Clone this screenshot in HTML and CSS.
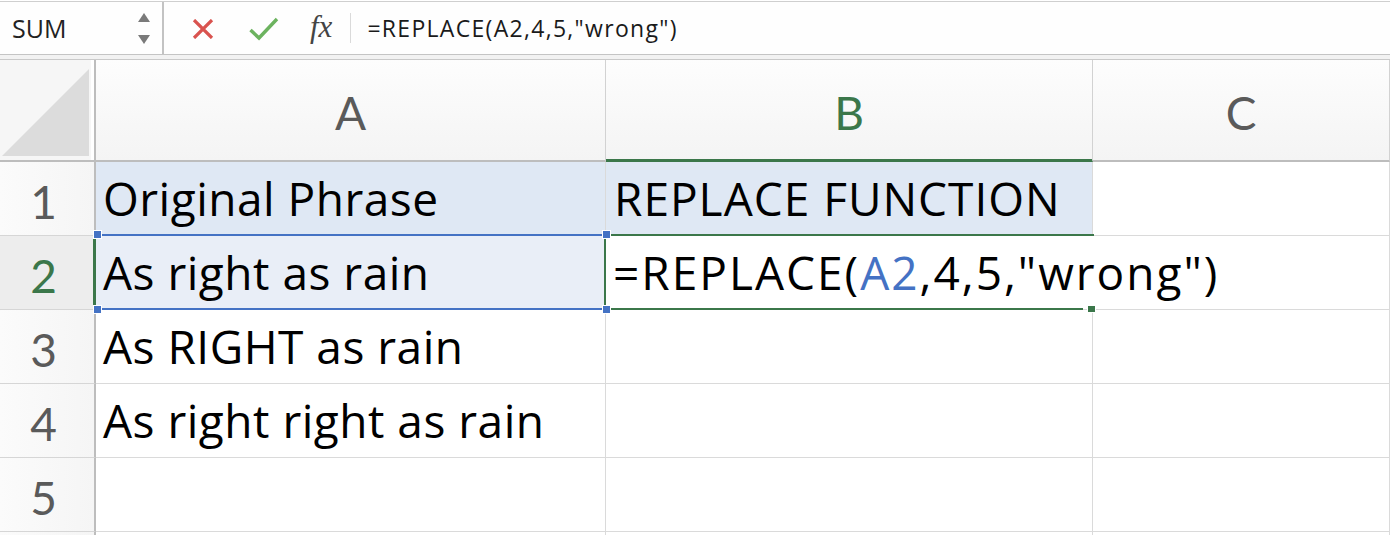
FILE: index.html
```html
<!DOCTYPE html>
<html>
<head>
<meta charset="utf-8">
<link rel="stylesheet" href="styles.css">
</head>
<body>
<div class="formula-bar">
  <div class="name-box">
    <span class="name">SUM</span>
    <svg class="spin" width="12" height="32" viewBox="0 0 12 32"><polygon points="6,0 12,9 0,9" fill="#7a7a7a"/><polygon points="0,22 12,22 6,31" fill="#7a7a7a"/></svg>
  </div>
  <div class="fb-icons">
    <svg class="ic-x" width="22" height="20" viewBox="0 0 22 20"><path d="M2 1 L20 19 M20 1 L2 19" stroke="#d9534f" stroke-width="3.2" stroke-linecap="butt" fill="none"/></svg>
    <svg class="ic-check" width="30" height="24" viewBox="0 0 30 24"><path d="M1.5 13 L10 21 L28 2" stroke="#6cb35f" stroke-width="3.4" fill="none"/></svg>
    <span class="fx">fx</span>
  </div>
  <div class="fb-divider"></div>
  <div class="fb-text">=REPLACE(A2,4,5,"wrong")</div>
</div>
<div class="fb-gap"></div>
<div class="sheet">
  <div class="corner"><svg width="93" height="100" viewBox="0 0 93 100"><polygon points="2,96 89,9 89,96" fill="#dcdcdc"/></svg></div>
  <div class="colhead">A</div>
  <div class="colhead active">B</div>
  <div class="colhead">C</div>

  <div class="rowhead">1</div>
  <div class="cell hl"><span class="txt">Original Phrase</span></div>
  <div class="cell hl caps"><span class="txt">REPLACE FUNCTION</span></div>
  <div class="cell"></div>

  <div class="rowhead active">2</div>
  <div class="cell ref"><span class="txt">As right as rain</span><span class="ref-box"></span><span class="h h-tl"></span><span class="h h-tr"></span><span class="h h-bl"></span><span class="h h-br"></span></div>
  <div class="cell edit"><span class="txt">=REPLACE(<span class="refc">A2</span>,4,5,"wrong")</span><span class="edit-box"></span><span class="edit-bottom"></span><span class="fill-handle"></span></div>
  <div class="cell"></div>

  <div class="rowhead">3</div>
  <div class="cell"><span class="txt">As RIGHT as rain</span></div>
  <div class="cell"></div>
  <div class="cell"></div>

  <div class="rowhead">4</div>
  <div class="cell"><span class="txt">As right right as rain</span></div>
  <div class="cell"></div>
  <div class="cell"></div>

  <div class="rowhead">5</div>
  <div class="cell"></div>
  <div class="cell"></div>
  <div class="cell"></div>

  <div class="rowhead"></div>
  <div class="cell"></div>
  <div class="cell"></div>
  <div class="cell"></div>
</div>
</body>
</html>
```

FILE: styles.css
```css
* { box-sizing: border-box; }
html, body { margin: 0; padding: 0; background: #fff; overflow: hidden; }
body { width: 1390px; height: 535px; font-family: "Open Sans", "Liberation Sans", sans-serif; }

.formula-bar {
  margin-top: 1px;
  height: 54px;
  border-top: 1px solid #cfcfcf;
  border-bottom: 1px solid #c4c4c4;
  display: flex;
  align-items: center;
  background: #fefefe;
}
.name-box {
  width: 164px;
  height: 100%;
  border-right: 2px solid #c3c3c3;
  display: flex;
  align-items: center;
  padding-left: 12px;
  padding-right: 12px;
}
.name { font-size: 25px; color: #222; flex: 1; }
.spin { margin-top: 1px; }
.fb-icons { display: flex; align-items: center; padding-left: 28px; }
.ic-x { margin-top: 1px; }
.ic-check { margin-left: 35px; margin-top: 2px; }
.fx {
  margin-left: 31px;
  font-family: "Liberation Serif", "DejaVu Serif", serif;
  font-style: italic;
  font-size: 31px;
  color: #444;
  margin-top: -3px;
}
.fb-divider { width: 1px; height: 30px; background: #dadada; margin-left: 18px; }
.fb-text { margin-left: 16px; font-size: 23px; letter-spacing: 1.3px; color: #1a1a1a; }

.fb-gap { height: 5px; background: #f2f2f2; border-bottom: 1px solid #c9c9c9; }

.sheet {
  display: grid;
  grid-template-columns: 96px 510px 487px 297px;
  grid-template-rows: 102px repeat(5, 74px) 3px;
}
.corner {
  background: #f6f6f6;
  border-right: 2px solid #bdbdbd;
  border-bottom: 2px solid #bdbdbd;
  box-shadow: inset -3px 0 0 #fff;
}
.corner svg { display: block; }
.colhead {
  background: linear-gradient(#fdfdfd, #f4f4f4);
  border-right: 1px solid #d2d2d2;
  border-bottom: 2px solid #bdbdbd;
  display: flex;
  align-items: center;
  justify-content: center;
  font-family: "Lato", "Open Sans", sans-serif;
  font-size: 46px;
  color: #5a5a5a;
  padding-top: 4px;
}
.colhead.active {
  color: #3b774a;
  border-bottom-color: #3b774a;
  box-shadow: inset 0 -1px 0 #3b774a;
}
.rowhead {
  background: linear-gradient(90deg, #fbfbfb, #f5f5f5);
  border-right: 2px solid #bdbdbd;
  border-bottom: 1px solid #d6d6d6;
  display: flex;
  align-items: center;
  justify-content: center;
  padding-right: 7px;
  padding-top: 6px;
  font-family: "Lato", "Open Sans", sans-serif;
  font-size: 46px;
  color: #5a5a5a;
  overflow: hidden;
}
.rowhead.active {
  background: #ededed;
  color: #3b774a;
  border-right-color: #3b774a;
  box-shadow: inset -1px 0 0 #3b774a;
}
.cell {
  border-right: 1px solid #dadada;
  border-bottom: 1px solid #dadada;
  display: flex;
  align-items: flex-end;
  padding-left: 7px;
  padding-bottom: 14px;
  font-size: 46px;
  letter-spacing: 0.5px;
  line-height: 1;
  color: #000;
  white-space: nowrap;
}
.cell.caps { letter-spacing: 1px; padding-left: 8px; }
.cell.hl { background: #dfe8f4; }
.cell.ref { background: #e9eef7; position: relative; }
.cell.edit {
  position: relative;
  z-index: 2;
  border-right-color: transparent;
  overflow: visible;
  letter-spacing: 2px;
}
.refc { color: #4472c4; }

.ref-box {
  position: absolute;
  top: -2px; left: -2px; right: -1px; bottom: -1px;
  border-top: 2px solid #4472c4;
  border-bottom: 2px solid #4472c4;
}
.h {
  position: absolute;
  width: 9px; height: 9px;
  background: #4472c4;
  border: 1px solid #fff;
  z-index: 3;
}
.h-tl { top: -6px; left: -3px; }
.h-tr { top: -6px; right: -6px; }
.h-bl { bottom: -5px; left: -3px; }
.h-br { bottom: -5px; right: -6px; }

.edit-box {
  position: absolute;
  top: -2px; left: -2px; right: -2px; bottom: 0;
  border-top: 2px solid #3b774a;
  border-left: 2px solid #3b774a;
}
.edit-bottom {
  position: absolute;
  left: 0; right: 9px; bottom: -1px;
  height: 2px;
  background: #3b774a;
}
.fill-handle {
  position: absolute;
  right: -4px; bottom: -4px;
  width: 9px; height: 8px;
  background: #3b774a;
  border: 1px solid #fff;
}
```
